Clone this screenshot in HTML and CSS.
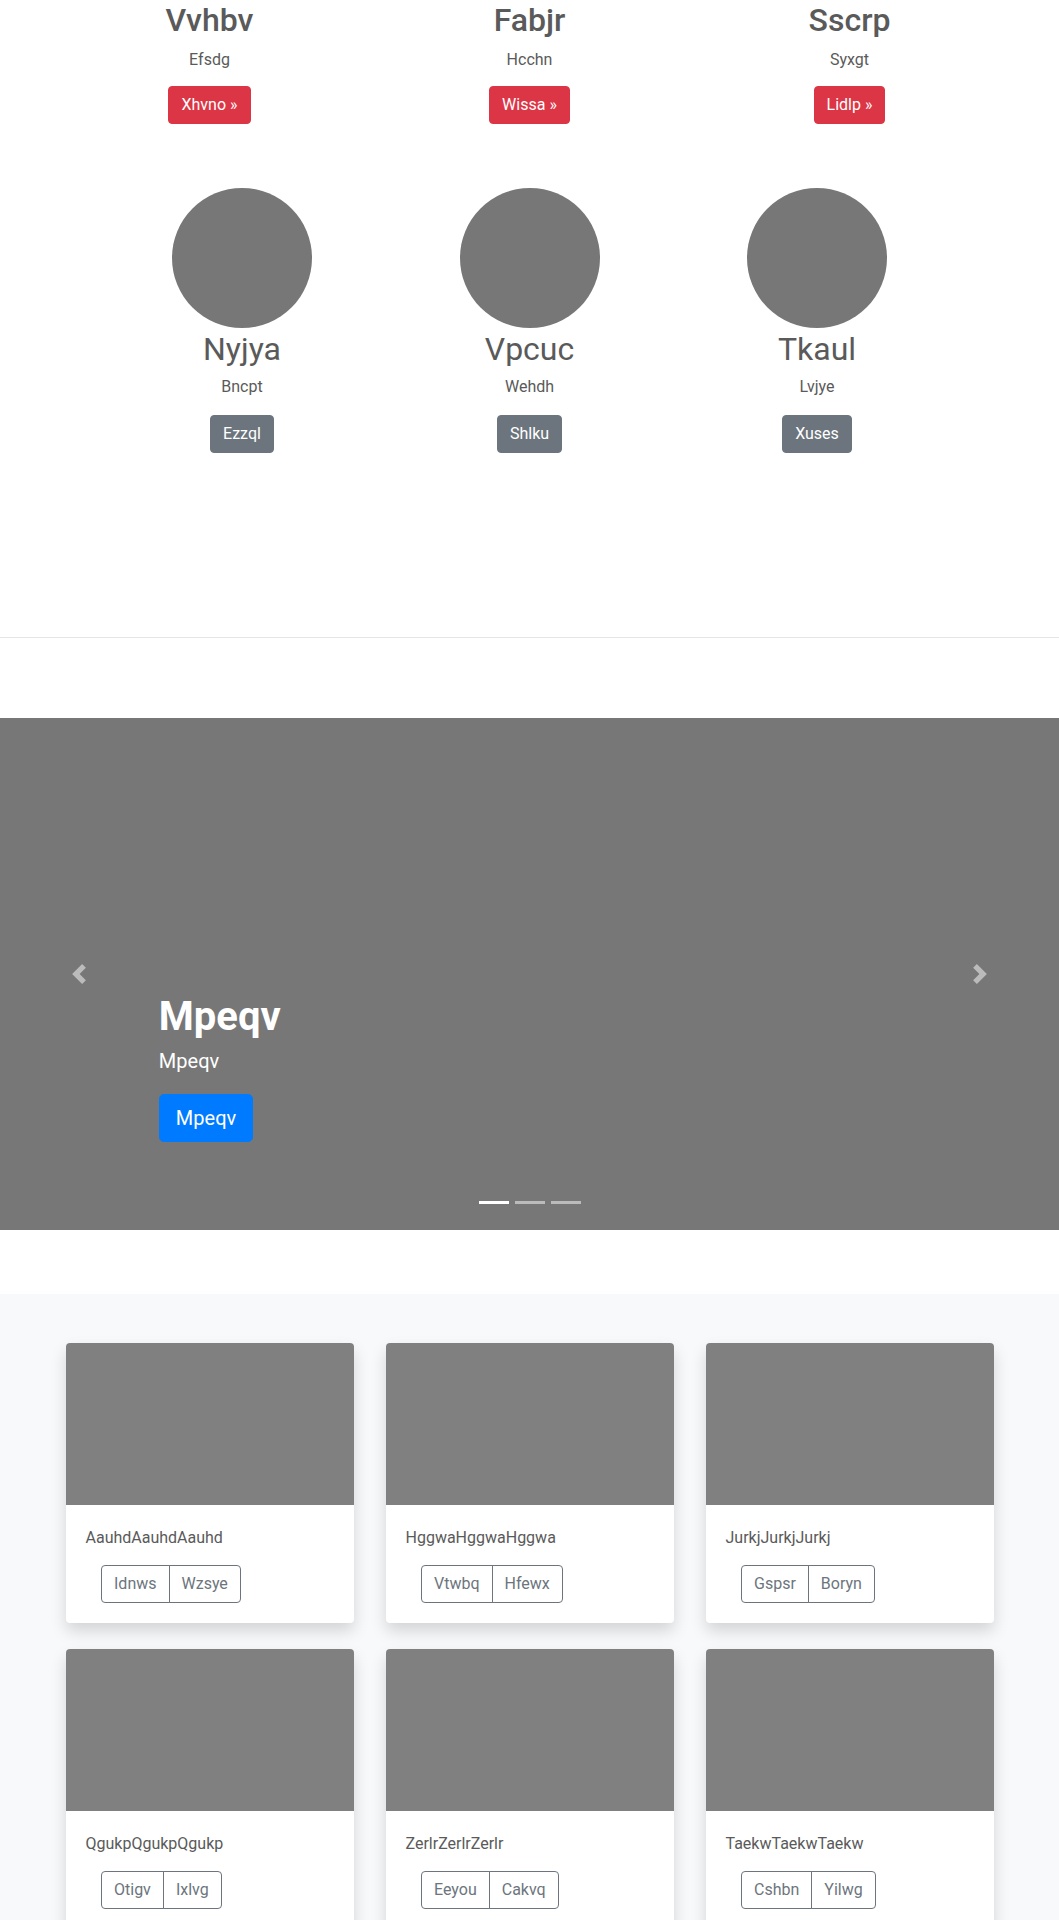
FILE: index.html
```html
<!DOCTYPE html>
<html lang="en">
<head>
<meta charset="utf-8">
<title>Page</title>
<link rel="stylesheet" href="styles.css">
</head>
<body>
<main>
  <div class="container">
    <div class="row-top">
      <div class="col-top">
        <h2 class="heading-top">Vvhbv</h2>
        <p class="sub">Efsdg</p>
        <p class="btn-line"><a class="btn btn-danger" href="#">Xhvno &raquo;</a></p>
      </div>
      <div class="col-top">
        <h2 class="heading-top">Fabjr</h2>
        <p class="sub">Hcchn</p>
        <p class="btn-line"><a class="btn btn-danger" href="#">Wissa &raquo;</a></p>
      </div>
      <div class="col-top">
        <h2 class="heading-top">Sscrp</h2>
        <p class="sub">Syxgt</p>
        <p class="btn-line"><a class="btn btn-danger" href="#">Lidlp &raquo;</a></p>
      </div>
    </div>
  </div>

  <div class="row-circles">
    <div class="col-circle">
      <div class="circle"></div>
      <h2 class="heading-person">Nyjya</h2>
      <p class="sub-person">Bncpt</p>
      <p class="btn-line"><a class="btn btn-secondary" href="#">Ezzql</a></p>
    </div>
    <div class="col-circle">
      <div class="circle"></div>
      <h2 class="heading-person">Vpcuc</h2>
      <p class="sub-person">Wehdh</p>
      <p class="btn-line"><a class="btn btn-secondary" href="#">Shlku</a></p>
    </div>
    <div class="col-circle">
      <div class="circle"></div>
      <h2 class="heading-person">Tkaul</h2>
      <p class="sub-person">Lvjye</p>
      <p class="btn-line"><a class="btn btn-secondary" href="#">Xuses</a></p>
    </div>
  </div>

  <hr class="divider">

  <div class="carousel">
    <ol class="indicators">
      <li class="indicator active"></li>
      <li class="indicator"></li>
      <li class="indicator"></li>
    </ol>
    <div class="caption">
      <h1 class="caption-title">Mpeqv</h1>
      <p class="caption-lead">Mpeqv</p>
      <p class="btn-line"><a class="btn btn-primary btn-lg" href="#">Mpeqv</a></p>
    </div>
    <a class="control control-prev" href="#">
      <svg class="control-icon" viewBox="0 0 8 8" width="20" height="20"><path d="M5.25 0l-4 4 4 4 1.5-1.5L4.25 4l2.5-2.5L5.25 0z"/></svg>
    </a>
    <a class="control control-next" href="#">
      <svg class="control-icon" viewBox="0 0 8 8" width="20" height="20"><path d="M2.75 0l-1.5 1.5L3.75 4l-2.5 2.5L2.75 8l4-4-4-4z"/></svg>
    </a>
  </div>

  <section class="album">
    <div class="album-container">
      <div class="card">
        <div class="thumb"></div>
        <div class="card-body">
          <p class="card-text">AauhdAauhdAauhd</p>
          <div class="btn-group"><a class="btn btn-outline" href="#">Idnws</a><a class="btn btn-outline" href="#">Wzsye</a></div>
        </div>
      </div>
      <div class="card">
        <div class="thumb"></div>
        <div class="card-body">
          <p class="card-text">HggwaHggwaHggwa</p>
          <div class="btn-group"><a class="btn btn-outline" href="#">Vtwbq</a><a class="btn btn-outline" href="#">Hfewx</a></div>
        </div>
      </div>
      <div class="card">
        <div class="thumb"></div>
        <div class="card-body">
          <p class="card-text">JurkjJurkjJurkj</p>
          <div class="btn-group"><a class="btn btn-outline" href="#">Gspsr</a><a class="btn btn-outline" href="#">Boryn</a></div>
        </div>
      </div>
      <div class="card">
        <div class="thumb"></div>
        <div class="card-body">
          <p class="card-text">QgukpQgukpQgukp</p>
          <div class="btn-group"><a class="btn btn-outline" href="#">Otigv</a><a class="btn btn-outline" href="#">Ixlvg</a></div>
        </div>
      </div>
      <div class="card">
        <div class="thumb"></div>
        <div class="card-body">
          <p class="card-text">ZerlrZerlrZerlr</p>
          <div class="btn-group"><a class="btn btn-outline" href="#">Eeyou</a><a class="btn btn-outline" href="#">Cakvq</a></div>
        </div>
      </div>
      <div class="card">
        <div class="thumb"></div>
        <div class="card-body">
          <p class="card-text">TaekwTaekwTaekw</p>
          <div class="btn-group"><a class="btn btn-outline" href="#">Cshbn</a><a class="btn btn-outline" href="#">Yilwg</a></div>
        </div>
      </div>
    </div>
  </section>
</main>
</body>
</html>
```

FILE: styles.css
```css
* {
  box-sizing: border-box;
}

html, body {
  margin: 0;
  padding: 0;
  background: #fff;
}

body {
  font-family: Roboto, "Liberation Sans", Arial, sans-serif;
  font-size: 16px;
  line-height: 24px;
  color: #5a5a5a;
}

a {
  text-decoration: none;
}

/* ---------- top marketing row ---------- */
.container {
  width: 960px;
  margin: 0 auto;
}

.row-top {
  display: grid;
  grid-template-columns: repeat(3, 1fr);
  padding-top: 1px;
  padding-bottom: 63.6px;
}

.col-top {
  text-align: center;
}

.heading-top {
  margin: 0 0 9px;
  font-size: 32px;
  line-height: 38.4px;
  font-weight: 500;
  color: #5a5a5a;
}

.sub {
  margin: 0 0 14px;
}

.btn-line {
  margin: 0;
}

/* ---------- buttons ---------- */
.btn {
  display: inline-block;
  padding: 6px 12px;
  font-size: 16px;
  line-height: 24px;
  font-weight: 400;
  border: 1px solid transparent;
  border-radius: 4px;
  text-align: center;
  vertical-align: middle;
}

.btn-danger {
  background: #dc3545;
  border-color: #dc3545;
  color: #fff;
}

.btn-secondary {
  background: #6c757d;
  border-color: #6c757d;
  color: #fff;
}

.btn-primary {
  background: #007bff;
  border-color: #007bff;
  color: #fff;
}

.btn-lg {
  padding: 8px 16px;
  font-size: 20px;
  line-height: 30px;
  border-radius: 4.8px;
}

.btn-outline {
  background: transparent;
  border-color: #6c757d;
  color: #6c757d;
}

/* ---------- circles row ---------- */
.row-circles {
  display: grid;
  grid-template-columns: repeat(3, 287.5px);
  justify-content: center;
  padding-bottom: 183.6px;
}

.col-circle {
  text-align: center;
}

.circle {
  width: 140px;
  height: 140px;
  border-radius: 50%;
  background: #777;
  margin: 0 auto;
}

.heading-person {
  margin: 2px 0 7px;
  font-size: 32px;
  line-height: 38.4px;
  font-weight: 400;
  color: #5a5a5a;
}

.sub-person {
  margin: 0 0 16px;
}

/* ---------- divider ---------- */
.divider {
  margin: 0 0 80px;
  border: 0;
  border-top: 1px solid #e5e5e5;
  height: 0;
}

/* ---------- carousel ---------- */
.carousel {
  position: relative;
  height: 512px;
  background: #777;
  margin-bottom: 64px;
  overflow: hidden;
}

.caption {
  position: absolute;
  left: 15%;
  right: 15%;
  top: 275px;
  color: #fff;
  text-align: left;
}

.caption-title {
  margin: 0 0 5px;
  font-size: 40px;
  line-height: 48px;
  font-weight: 700;
}

.caption-lead {
  margin: 0 0 17.5px;
  font-size: 20px;
  line-height: 30px;
  font-weight: 400;
}

.control {
  position: absolute;
  top: 0;
  bottom: 0;
  width: 15%;
  display: flex;
  align-items: center;
  justify-content: center;
  opacity: 0.5;
}

.control-prev {
  left: 0;
}

.control-next {
  right: 0;
}

.control-icon {
  display: block;
  fill: #fff;
}

.indicators {
  position: absolute;
  left: 0;
  right: 0;
  bottom: 26px;
  margin: 0;
  padding: 0;
  list-style: none;
  display: flex;
  justify-content: center;
  gap: 6px;
}

.indicator {
  width: 30px;
  height: 3px;
  background: rgba(255, 255, 255, 0.5);
}

.indicator.active {
  background: #fff;
}

/* ---------- album ---------- */
.album {
  background: #f8f9fa;
  padding: 48.5px 0 48px;
}

.album-container {
  width: 960px;
  margin: 0 auto;
  padding: 0 16px;
  display: grid;
  grid-template-columns: repeat(3, 1fr);
  column-gap: 32px;
  row-gap: 26.3px;
}

.card {
  background: #fff;
  border-radius: 4px;
  overflow: hidden;
  box-shadow: 0 8px 16px rgba(0, 0, 0, 0.15);
}

.thumb {
  height: 162px;
  background: #808080;
}

.card-body {
  padding: 20px;
}

.card-text {
  margin: 0 0 16px;
  padding-top: 1px;
  line-height: 23px;
  color: #5a5a5a;
}

.btn-group {
  display: inline-flex;
  margin-left: 15.5px;
}

.btn-group .btn {
  border-radius: 0;
}

.btn-group .btn + .btn {
  margin-left: -1px;
}

.btn-group .btn:first-child {
  border-radius: 4px 0 0 4px;
}

.btn-group .btn:last-child {
  border-radius: 0 4px 4px 0;
}
```
